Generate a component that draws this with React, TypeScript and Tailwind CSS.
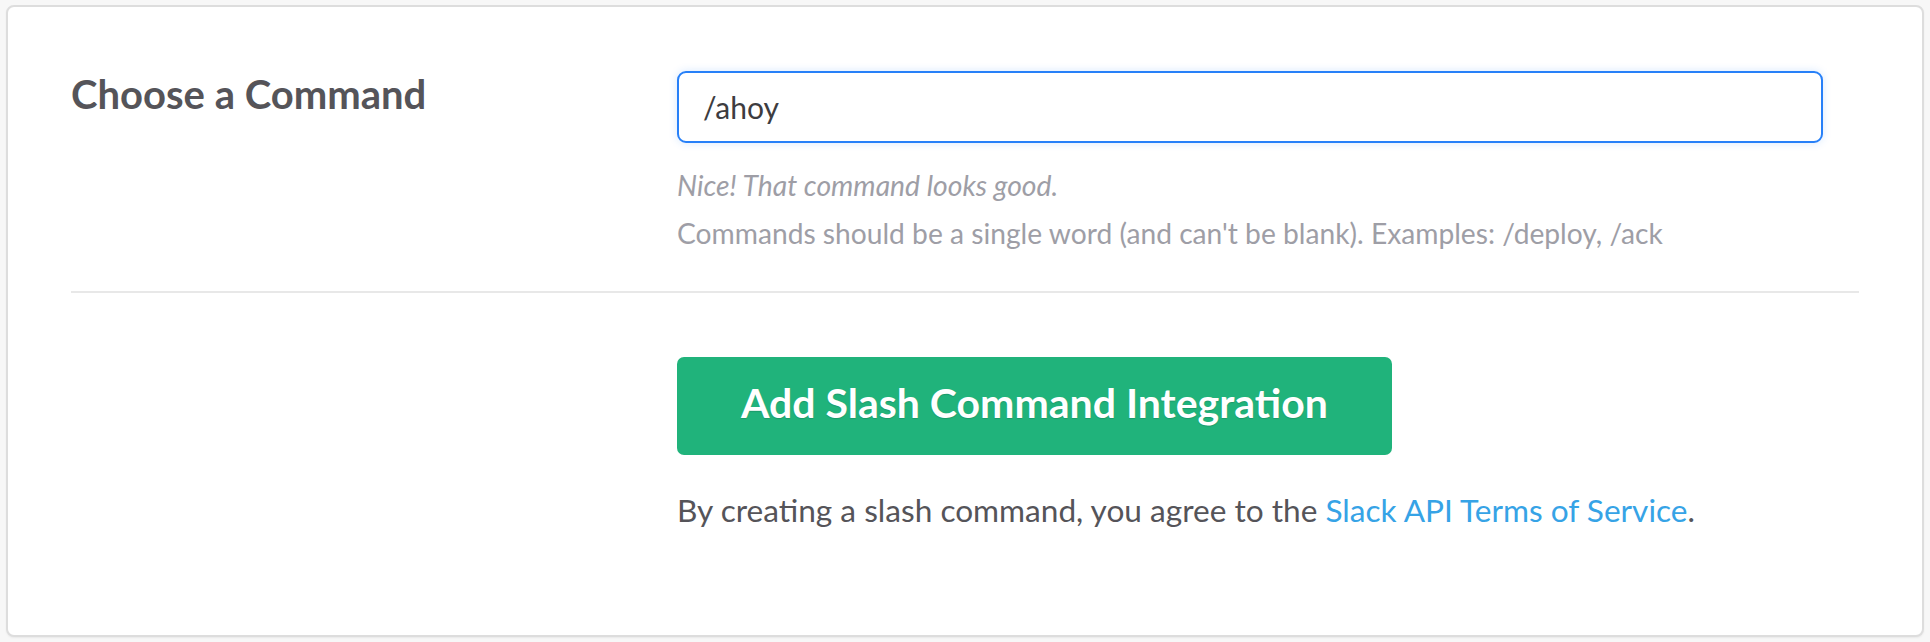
import React from 'react';

export default function App() {
  return (
    <div className="min-h-screen bg-[#f7f7f7] px-[6px] pt-[5px] pb-[6px] font-['Lato',sans-serif]">
      <div className="rounded-[8px] border-2 border-[#dddddd] bg-white px-[63px] pt-[64px] pb-[107px] shadow-[0_1px_2px_rgba(0,0,0,0.06)]">
        <div className="flex items-start">
          <div className="w-[606px] shrink-0">
            <h2 className="text-[40px] font-bold leading-[48px] text-[#555459] -mt-[1px]">Choose a Command</h2>
          </div>
          <div className="flex-1">
            <div className="flex h-[72px] w-[1146px] items-center rounded-[9px] border-2 border-[#2780f8] bg-white pl-[24px] text-[30px] text-[#3d3c40] shadow-[0_0_8px_rgba(39,128,248,0.18)]">
              /ahoy
            </div>
            <p className="mt-[18px] text-[28.3px] italic leading-[48px] text-[#9e9ea6]">Nice! That command looks good.</p>
            <p className="text-[28.2px] leading-[48px] text-[#9e9ea6]">
              Commands should be a single word (and can't be blank). Examples: /deploy, /ack
            </p>
          </div>
        </div>

        <div className="mt-[34px] h-[2px] bg-[#e8e8e8]" />

        <div className="ml-[606px] pt-[64px]">
          <button className="flex h-[98px] items-center rounded-[7px] bg-[#20b37b] px-[64px] pb-[6px] text-[41px] font-bold text-white [text-shadow:0_1px_1px_rgba(0,0,0,0.15)]">
            Add Slash Command Integration
          </button>
          <p className="mt-[37px] text-[31.6px] leading-[36px] text-[#555459]">
            By creating a slash command, you agree to the{' '}
            <a className="text-[#36a3e6]">Slack API Terms of Service</a>.
          </p>
        </div>
      </div>
    </div>
  );
}
